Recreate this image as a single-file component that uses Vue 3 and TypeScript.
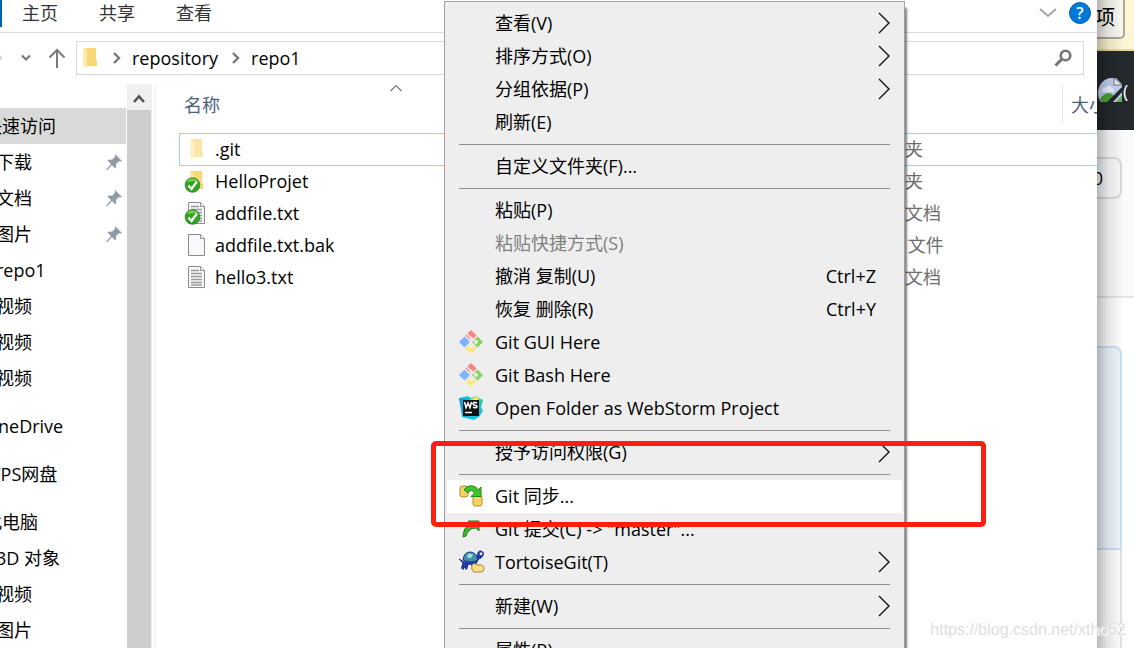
<script setup lang="ts">
interface NavItem { label: string; child?: boolean; pinned?: boolean; selected?: boolean; gap?: boolean }
interface FileItem { name: string; type: string; icon: 'folder' | 'text' | 'blank'; faded?: boolean; synced?: boolean; focused?: boolean }
interface MenuItem { label: string; sub?: boolean; disabled?: boolean; active?: boolean; keys?: string; icon?: string }

const tabs: string[] = ['主页', '共享', '查看']
const crumbs: string[] = ['repository', 'repo1']

const nav: NavItem[] = [
  { label: '快速访问', selected: true },
  { label: '下载', child: true, pinned: true },
  { label: '文档', child: true, pinned: true },
  { label: '图片', child: true, pinned: true },
  { label: 'repo1', child: true },
  { label: '视频', child: true },
  { label: '视频', child: true },
  { label: '视频', child: true },
  { label: 'OneDrive', gap: true },
  { label: 'WPS网盘', gap: true },
  { label: '此电脑', gap: true },
  { label: '3D 对象', child: true },
  { label: '视频', child: true },
  { label: '图片', child: true },
]

const files: FileItem[] = [
  { name: '.git', type: '文件夹', icon: 'folder', faded: true, focused: true },
  { name: 'HelloProjet', type: '文件夹', icon: 'folder', synced: true },
  { name: 'addfile.txt', type: '文本文档', icon: 'text', synced: true },
  { name: 'addfile.txt.bak', type: 'BAK 文件', icon: 'blank' },
  { name: 'hello3.txt', type: '文本文档', icon: 'text' },
]

const groups: MenuItem[][] = [
  [
    { label: '查看(V)', sub: true },
    { label: '排序方式(O)', sub: true },
    { label: '分组依据(P)', sub: true },
    { label: '刷新(E)' },
  ],
  [{ label: '自定义文件夹(F)...' }],
  [
    { label: '粘贴(P)' },
    { label: '粘贴快捷方式(S)', disabled: true },
    { label: '撤消 复制(U)', keys: 'Ctrl+Z' },
    { label: '恢复 删除(R)', keys: 'Ctrl+Y' },
    { label: 'Git GUI Here', icon: 'git' },
    { label: 'Git Bash Here', icon: 'git' },
    { label: 'Open Folder as WebStorm Project', icon: 'webstorm' },
  ],
  [{ label: '授予访问权限(G)', sub: true }],
  [
    { label: 'Git 同步...', icon: 'sync', active: true },
    { label: 'Git 提交(C) -> "master"...', icon: 'commit' },
    { label: 'TortoiseGit(T)', icon: 'tortoise', sub: true },
  ],
  [{ label: '新建(W)', sub: true }],
  [{ label: '属性(R)' }],
]
</script>

<template>
  <div class="screen">
    <main class="explorer">
      <div class="ribbon">
        <span class="file-tab"></span>
        <button v-for="t in tabs" :key="t" class="tab">{{ t }}</button>
        <button class="expand" aria-label="展开功能区">
          <svg width="18" height="10" viewBox="0 0 18 10"><path d="M1 1l8 7 8-7" fill="none" stroke="#a6a6a6" stroke-width="2" /></svg>
        </button>
        <button class="help" aria-label="帮助">?</button>
      </div>

      <div class="address-row">
        <button class="plain forward" aria-label="前进">
          <svg width="3" height="8" viewBox="0 0 3 8"><path d="M0 1l2 3-2 3z" fill="#d2d2d2" /></svg>
        </button>
        <button class="plain recent" aria-label="最近浏览的位置">
          <svg width="10" height="8" viewBox="0 0 10 8"><path d="M1 1.5l4 4 4-4" fill="none" stroke="#777" stroke-width="2.2" /></svg>
        </button>
        <button class="plain up" aria-label="向上">
          <svg width="18" height="20" viewBox="0 0 18 20"><path d="M9 20V2M1.5 9.5L9 2l7.500 7.500" fill="none" stroke="#7a7a7a" stroke-width="2" /></svg>
        </button>
        <div class="address">
          <svg class="folder" width="16" height="22" viewBox="0 0 16 22"><path d="M3 1h11v12l1 1v5H4z" fill="#f7d778" /><path d="M1 1l4 3v18l-4-3z" fill="#ffe9a6" /></svg>
          <template v-for="c in crumbs" :key="c">
            <svg class="crumb-arrow" width="10" height="12" viewBox="0 0 10 12"><path d="M2 1l5 5-5 5" fill="none" stroke="#777" stroke-width="2.4" /></svg>
            <a href="#" class="crumb">{{ c }}</a>
          </template>
        </div>
        <div class="search">
          <input type="search" aria-label="搜索" />
          <svg width="18" height="18" viewBox="0 0 18 18"><circle cx="11.500" cy="6.500" r="4.800" fill="none" stroke="#747474" stroke-width="2.600" /><path d="M8 10L1.500 16.500" stroke="#747474" stroke-width="3" /></svg>
        </div>
      </div>

      <div class="body">
        <nav class="sidebar">
          <ul>
            <li v-for="(n, i) in nav" :key="i" :class="{ child: n.child, selected: n.selected, gap: n.gap }">
              <a href="#">{{ n.label }}</a>
              <svg v-if="n.pinned" width="16" height="16" viewBox="0 0 16 16">
                <path d="M9 0l7 7-2 .6-1-.6-3 3 .3 3-1.300 1.200L6 11l-4.500 5L0 15.800 5 10 1.500 6.600 2.800 5.500l3.200.2 3-3z" fill="#8f9ba5" />
              </svg>
            </li>
          </ul>
        </nav>
        <div class="scrollbar">
          <button aria-label="向上滚动">
            <svg width="12" height="10" viewBox="0 0 12 10"><path d="M1 8l5-5.500L11 8" fill="none" stroke="#555" stroke-width="2.600" /></svg>
          </button>
          <div class="thumb"></div>
        </div>
        <section class="list">
          <table>
            <colgroup><col class="c-name" /><col /><col class="c-type" /><col class="c-size" /></colgroup>
            <thead>
              <tr>
                <th class="sorted">
                  名称
                  <svg width="12" height="8" viewBox="0 0 12 8"><path d="M.5 7L6 1.500 11.500 7" fill="none" stroke="#777" stroke-width="1.200" /></svg>
                </th>
                <th></th>
                <th></th>
                <th class="size">大小</th>
              </tr>
            </thead>
            <tbody>
              <tr v-for="f in files" :key="f.name" :class="{ focused: f.focused }">
                <td>
                  <div class="file">
                    <svg width="24" height="26" viewBox="0 0 24 26">
                      <g v-if="f.icon === 'folder'" :opacity="f.faded ? 0.6 : 1">
                        <path d="M6 3h12v12l1 1v5H8z" fill="#f7d778" /><path d="M6 3l4 3v18l-4-3z" fill="#ffe9a6" />
                      </g>
                      <g v-else>
                        <path d="M4.500 2.500h12l4 4v17h-16z" fill="#f8f9fa" stroke="#8a8a8a" />
                        <path d="M16.500 2.500v4h4" fill="#fff" stroke="#8a8a8a" />
                        <path v-if="f.icon === 'text'" d="M7 6.500h8M7 9.500h11M7 12.500h11M7 15.500h11M7 18.500h11M7 21h11" stroke="#999" stroke-width="1.300" />
                      </g>
                      <g v-if="f.synced">
                        <circle cx="8.500" cy="17" r="7.300" fill="#30a51f" stroke="#248017" stroke-width=".8" />
                        <path d="M3 14a6 5 0 0 1 11-1q-6 0-11 1z" fill="#76cc58" />
                        <path d="M4.500 17.500l3 3.500 5.500-7.500" fill="none" stroke="#fff" stroke-width="2.200" />
                      </g>
                    </svg>
                    {{ f.name }}
                  </div>
                </td>
                <td></td>
                <td class="type">{{ f.type }}</td>
                <td></td>
              </tr>
            </tbody>
          </table>
        </section>
      </div>
    </main>

    <aside class="behind">
      <div class="notice"><button>选项</button></div>
      <div class="dark">
        <svg width="25" height="25" viewBox="0 0 25 25">
          <path d="M12 0h6l6 6v18H3a12 12 0 0 1-3-8A14 15 0 0 1 12 0z" fill="#c3d4f4" />
          <path d="M3 14q1-5 5-4 2-4 5-1 4 1 3 5z" fill="#f2f6ff" />
          <path d="M2 21q8-10 14-3l-6 6H4z" fill="#4da52e" />
          <path d="M16 0v7h8z" fill="#f3f3f3" stroke="#777" /><path d="M25 8v5L15 24h-6z" fill="#24292e" /><path d="M24 17v7h-6z" fill="#6ab548" />
        </svg>
        <span>(</span>
      </div>
      <div class="repo-head"><button>0</button></div>
      <div class="repo-body"><div class="commit"></div><div class="rest"></div></div>
    </aside>

    <div class="menu" role="menu">
      <div v-for="(g, gi) in groups" :key="gi" class="group">
        <button v-for="m in g" :key="m.label" role="menuitem" class="item" :class="{ active: m.active }" :disabled="m.disabled">
          <span class="icon">
            <svg v-if="m.icon === 'git'" width="24" height="24" viewBox="0 0 24 24">
              <path d="M12 0l5.500 5.500-5.500 5.500L6.500 5.500z" fill="#ff8080" />
              <path d="M5.500 6.500L11 12l-5.500 5.500L0 12z" fill="#80b3ff" />
              <path d="M18.500 6.500L24 12l-5.500 5.500L13 12z" fill="#87d35f" />
              <path d="M12 13l5.500 5.500L12 24l-5.500-5.500z" fill="#ffe680" />
              <path d="M7.500 3.500l4.500 4.500v9M12 8l5 4" fill="none" stroke="#eee" stroke-width="1.500" />
              <circle cx="12" cy="8" r="1.600" fill="#eee" /><circle cx="12" cy="16.500" r="2" fill="#eee" /><circle cx="17" cy="12" r="2" fill="#eee" />
            </svg>
            <svg v-else-if="m.icon === 'webstorm'" width="24" height="24" viewBox="0 0 24 24">
              <path d="M0 2l9-2 3 2 6-2 3 3 3 1-2 7 2 4-4 6-5 3-12-3z" fill="#15c3df" />
              <path d="M0 2l4 18 4 2V3z" fill="#13a3d8" /><path d="M11 4l7-4 2 3-2 2z" fill="#f5ef39" /><path d="M21 3l3 1-3 6z" fill="#20d0a0" />
              <path d="M4 4h16v16H4z" fill="#111" />
              <path d="M5.500 6l1.600 5.500L9 7l1.900 4.500L12.500 6M18 7q-4-1.500-4 .8 0 1 2 1.400t2 1.400q0 1.800-4 .6" fill="none" stroke="#fff" stroke-width="1.600" />
              <path d="M6 16.500h7" stroke="#fff" stroke-width="1.500" />
            </svg>
            <svg v-else-if="m.icon === 'sync'" width="24" height="24" viewBox="0 0 24 24">
              <rect x="1" y="2" width="8" height="11" rx="2.500" fill="#f7d465" stroke="#b48a22" />
              <rect x="14" y="11" width="9" height="11" rx="2.500" fill="#f7d465" stroke="#b48a22" />
              <path d="M5 6q3-5 9-4 4 1 5 4l3-3v9.500H12L15.500 9q-2-3-4-2.500T9.500 9z" fill="#3fc52c" stroke="#218a18" />
            </svg>
            <svg v-else-if="m.icon === 'commit'" width="24" height="24" viewBox="0 0 24 24">
              <path d="M4 20Q4 10 12 7L9 4h11v10l-3-3Q9 11 7 19z" fill="#3cb52a" stroke="#1d7f17" />
            </svg>
            <svg v-else-if="m.icon === 'tortoise'" width="26" height="24" viewBox="0 0 26 24">
              <path d="M0 9l5 3 11-3 2.500-4.500Q19 .5 22 1q3.500 1 2 4.500L22 8q-2 .5-3 2l-2 4 1 5h-3.500L12 14l-3 .5-1 4-1 1-1-3-2 3-1.500-1.500L4 13z" fill="#2339bd" stroke="#0d1763" stroke-width=".8" />
              <path d="M4 10Q5 2 11 2q6 0 8 8-7 4-15 0z" fill="#3f8fae" stroke="#173c80" />
              <path d="M8 5q3-3 6 0l-2 3H9z" fill="#a2dcdc" /><circle cx="22" cy="3.800" r="1.400" fill="#fff" />
              <path d="M13 15q1-2 4-1l2 1h4q2 1 2 4 0 3-3 3h-7q-3-1-2-7z" fill="#f9dc8c" stroke="#aa8438" />
            </svg>
          </span>
          <span class="label">{{ m.label }}</span>
          <span v-if="m.keys" class="keys">{{ m.keys }}</span>
          <svg v-if="m.sub" class="sub" width="12" height="22" viewBox="0 0 12 22"><path d="M1 1l10 10L1 21" fill="none" stroke="#111" stroke-width="1.400" /></svg>
        </button>
      </div>
    </div>

    <div class="marker"></div>
    <div class="watermark">https://blog.csdn.net/xtho62</div>
  </div>
</template>

<style>
body { margin: 0; }
</style>

<style scoped>
* { box-sizing: border-box; }
.screen {
  position: relative;
  display: grid;
  grid-template-columns: minmax(0, 1fr) 37px;
  height: 100vh;
  overflow: hidden;
  background: #fff;
  color: #000;
  font-family: "Open Sans", "Noto Sans CJK SC", sans-serif;
  font-size: 18px;
  line-height: 24px;
}
button { font: inherit; color: inherit; padding: 0; border: 0; background: none; }
a { color: inherit; text-decoration: none; }
svg { display: block; flex: none; }

.explorer {
  position: relative;
  z-index: 1;
  display: flex;
  flex-direction: column;
  min-height: 0;
  overflow: hidden;
  background: #fff;
}
.ribbon { display: flex; align-items: center; height: 33px; padding: 0 6px 6px 0; border-bottom: 1px solid #dadbdc; }
.file-tab { width: 2px; height: 28px; margin-right: 20px; background: #0063b1; }
.tab { margin-right: 41px; color: #333; }
.expand { margin-left: auto; }
.help { width: 22px; height: 22px; margin-left: 12px; border: 1px solid #0060b0; border-radius: 50%; background: #0078d7; color: #fff; font-size: 16px; font-weight: 600; line-height: 20px; }

.address-row { display: flex; align-items: center; height: 51px; padding: 0 13px 2px 0; }
.forward { margin-right: 18px; }
.recent { margin-right: 17px; }
.up { margin-right: 10px; }
.address { display: flex; flex: 1; align-items: center; height: 34px; padding-left: 5px; border: 1px solid #d9d9d9; }
.crumb-arrow { margin: 0 10px 0 14px; }
.crumb + .crumb-arrow { margin-left: 13px; }
.search { display: flex; align-items: center; width: 220px; height: 34px; margin-left: 12px; padding-right: 11px; border: 1px solid #d9d9d9; }
.search input { flex: 1; min-width: 0; height: 100%; border: 0; outline: 0; background: none; font: inherit; }

.body { display: flex; flex: 1; min-height: 0; }
.sidebar { width: 126px; padding-top: 24px; overflow: hidden; }
.sidebar ul { margin: 0; padding: 0; list-style: none; }
.sidebar li { display: flex; align-items: center; justify-content: space-between; height: 36px; margin-left: -16px; padding-right: 4px; white-space: nowrap; }
.sidebar .child { padding-left: 12px; }
.sidebar .selected { background: #d9d9d9; }
.sidebar .gap { margin-top: 12px; }
.scrollbar { display: flex; flex-direction: column; width: 25px; margin-left: 1px; border-right: 1px solid #f0f0f0; }
.scrollbar button { display: grid; place-items: center; height: 26px; padding-top: 4px; background: #f0f0f0; }
.thumb { flex: 1; background: #cdcdcd; }
.list { flex: 1; min-width: 0; margin-left: 2px; padding-left: 23px; border-left: 2px solid #f5f5f5; }
table { width: 100%; table-layout: fixed; border-collapse: separate; border-spacing: 0; }
.c-name { width: 434px; }
.c-type { width: 200px; }
.c-size { width: 35px; }
th { position: relative; height: 49px; padding: 0 0 8px 5px; color: #4c607a; font-weight: 400; text-align: left; white-space: nowrap; }
th.sorted svg { position: absolute; top: 0; left: 50%; margin-left: -6px; }
th.size { padding-left: 9px; overflow: hidden; background: linear-gradient(#e5e5e5, #e5e5e5) 0 0 / 1px 40px no-repeat; }
td { height: 32px; padding: 0; white-space: nowrap; }
.file { display: flex; align-items: center; gap: 7px; padding-left: 5px; }
.type { padding-left: 7px; color: #6d6d6d; }
.focused { box-shadow: inset 1px 1px 0 #99d1ff, 0 1px 0 #99d1ff; }

.behind { position: relative; display: flex; flex-direction: column; min-height: 0; overflow: hidden; background: #fff; }
.behind::after { content: ""; position: absolute; inset: 0 10px 0 0; background: linear-gradient(90deg, rgba(0, 0, 0, .27), rgba(0, 0, 0, .1) 40%, transparent); }
.notice { display: flex; justify-content: flex-end; height: 51px; padding-right: 9px; border-bottom: 2px solid #e6da9e; background: #fef6d4; overflow: hidden; }
.notice button { flex: none; width: 80px; height: 39px; padding: 0 8px 2px 0; border: 2px solid #aaa69a; border-top: 0; border-radius: 0 0 5px 5px; background: #fafaf1; font-size: 20px; text-align: right; }
.dark { display: flex; align-items: center; height: 79px; padding-left: 1px; overflow: hidden; background: #24292e; color: #fff; }
.repo-head { display: flex; justify-content: flex-end; align-items: flex-start; height: 168px; padding: 27px 12px 0 0; border-bottom: 2px solid #e1e4e8; background: #fafbfc; overflow: hidden; }
.repo-head button { flex: none; width: 80px; height: 42px; padding-right: 17px; border: 2px solid #d9dbdd; border-radius: 8px; text-align: right; }
.repo-body { display: flex; flex: 1; flex-direction: column; padding: 48px 12px 0 0; }
.commit { height: 204px; border: 2px solid #c8e1ff; border-left: 0; border-radius: 0 8px 0 0; background: #f1f8ff; }
.rest { flex: 1; border-right: 2px solid #e1e4e8; }

.menu {
  position: absolute;
  z-index: 2;
  top: 1px;
  left: 444px;
  width: 461px;
  padding: 5px 2px;
  border: 1px solid #a0a0a0;
  background: #eee;
  box-shadow: 3px 6px 2px -1px rgba(0, 0, 0, .5);
}
.group + .group::before { content: ""; display: block; height: 1px; margin: 5px 12px; background: #919191; }
.item { display: flex; align-items: center; width: 100%; height: 33px; padding: 0 12px 2px; text-align: left; white-space: nowrap; }
.item.active { background: #fff; }
.item:disabled { color: #808080; }
.icon { width: 36px; }
.keys { margin-left: auto; padding-right: 14px; }
.sub { margin-left: auto; }

.marker { position: absolute; z-index: 3; top: 441px; left: 431px; width: 555px; height: 86px; border: 5px solid #ff1f10; border-radius: 5px; pointer-events: none; }
.watermark { position: absolute; z-index: 3; right: 8px; bottom: 6px; color: #dedede; font-family: "Liberation Sans", sans-serif; font-size: 16px; text-shadow: 1px 1px 0 #fff; }
</style>
